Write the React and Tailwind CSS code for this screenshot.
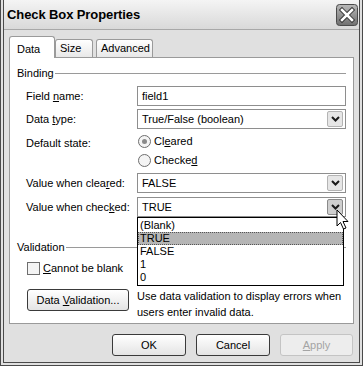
import React from 'react'

const font = { fontFamily: '"Liberation Sans", Arial, sans-serif' }

function Chevron() {
  return (
    <svg width="9" height="6" viewBox="0 0 9 6">
      <path d="M1 1 L4.5 4.5 L8 1" fill="none" stroke="#1a1a1a" strokeWidth="2" />
    </svg>
  )
}

function Select({ value, pressed, children }) {
  return (
    <div className="relative flex h-[20px] items-center border border-[#8e8e8e] bg-white pl-[4px] pr-[2px]">
      <span className="flex-1 leading-none">{value}</span>
      <span
        className={`flex h-[16px] w-[16px] items-center justify-center rounded-[2px] border ${
          pressed ? 'border-[#8a8a8a] bg-[#cfcfcf]' : 'border-[#b4b4b4] bg-[#e6e6e6]'
        }`}
      >
        <Chevron />
      </span>
      {children}
    </div>
  )
}

function Radio({ checked }) {
  return (
    <span className="flex h-[13px] w-[13px] items-center justify-center rounded-full border border-[#6e6e6e] bg-[#f4f4f4]">
      {checked && <span className="h-[5px] w-[5px] rounded-full bg-[#8a8a8a]" />}
    </span>
  )
}

function GroupHeader({ label }) {
  return (
    <div className="flex h-[14px] items-center gap-[1px]">
      <span className="leading-none">{label}</span>
      <span className="h-px flex-1 bg-[#9a9a9a]" />
    </div>
  )
}

function Button({ children, disabled, className = '' }) {
  return (
    <div
      className={`flex h-[22px] shrink-0 items-center justify-center whitespace-nowrap rounded-[3px] border ${
        disabled
          ? 'border-[#c4c4c4] bg-[#ededed] text-[#a4a4a4]'
          : 'border-[#3a3a3a] bg-gradient-to-b from-white to-[#e4e4e4] text-black'
      } ${className}`}
    >
      {children}
    </div>
  )
}

export default function App() {
  return (
    <div
      style={font}
      className="relative flex h-[366px] w-[363px] flex-col overflow-hidden border-[4px] border-t-0 border-double border-[#4a4a4a] bg-[#e0e0e0] text-[11px] text-black"
    >
      {/* title bar */}
      <div className="flex h-[30px] items-center justify-between border-b border-[#a8a8a8] bg-gradient-to-b from-[#f4f4f4] to-[#d9d9d9] pl-[3px] pr-[1px]">
        <span className="text-[13px] font-bold tracking-[-0.1px]">Check Box Properties</span>
        <svg width="22" height="22" viewBox="0 0 22 22">
          <defs>
            <linearGradient id="cb" x1="0" y1="0" x2="0" y2="1">
              <stop offset="0" stopColor="#b9b9b9" />
              <stop offset="1" stopColor="#6f6f6f" />
            </linearGradient>
          </defs>
          <rect x="0.5" y="0.5" width="21" height="21" rx="3" fill="url(#cb)" stroke="#4a4a4a" />
          <path d="M6 6 L16 16 M16 6 L6 16" stroke="#3a3a3a" strokeWidth="4.5" strokeLinecap="square" />
          <path d="M6 6 L16 16 M16 6 L6 16" stroke="#ffffff" strokeWidth="2.5" strokeLinecap="square" />
        </svg>
      </div>

      <div className="flex flex-1 flex-col px-[5px] pt-[6px]">
        {/* tabs */}
        <div className="flex h-[21px] items-end">
          <div className="relative z-10 -mb-px flex h-[22px] w-[46px] items-start rounded-t-[3px] border border-b-0 border-[#9a9a9a] bg-white pl-[7px] pt-[4px]">
            Data
          </div>
          <div className="flex h-[18px] w-[38px] items-center rounded-t-[3px] border border-b-0 border-[#9a9a9a] bg-gradient-to-b from-white to-[#e8e8e8] pl-[4px]">
            Size
          </div>
          <div className="ml-[3px] flex h-[18px] w-[57px] items-center rounded-t-[3px] border border-b-0 border-[#9a9a9a] bg-gradient-to-b from-white to-[#e8e8e8] pl-[4px]">
            Advanced
          </div>
        </div>

        {/* tab panel */}
        <div className="flex h-[267px] flex-col border border-[#9a9a9a] bg-white pl-[7px] pr-[7px] pt-[8px]">
          <GroupHeader label="Binding" />
          <div className="mt-[6px] grid grid-cols-[111px_1fr] items-center pl-[9px]">
            <span>
              Field <u>n</u>ame:
            </span>
            <div className="flex h-[20px] items-center border border-[#8e8e8e] bg-white pl-[4px]">field1</div>

            <span className="mt-[3px]">
              Data <u>t</u>ype:
            </span>
            <div className="mt-[3px]">
              <Select value="True/False (boolean)" />
            </div>

            <span className="mt-[3px] self-start pt-[3px]">Default state:</span>
            <div className="mt-[3px] flex flex-col pl-[1px]">
              <div className="flex h-[19px] items-center gap-[3px]">
                <Radio checked />
                <span>
                  Cl<u>e</u>ared
                </span>
              </div>
              <div className="flex h-[19px] items-center gap-[3px]">
                <Radio />
                <span>
                  Checke<u>d</u>
                </span>
              </div>
            </div>

            <span className="mt-[3px]">
              Value when clea<u>r</u>ed:
            </span>
            <div className="mt-[3px]">
              <Select value="FALSE" />
            </div>

            <span className="mt-[4px]">
              Value when chec<u>k</u>ed:
            </span>
            <div className="mt-[4px]">
              <Select value="TRUE" pressed>
                {/* open drop-down list */}
                <div className="absolute left-[-1px] right-[1px] top-[19px] z-20 flex flex-col border border-black bg-white py-[1px] leading-[13px]">
                  <span className="pl-[2px]">(Blank)</span>
                  <span className="border border-dotted border-[#555] bg-[#b5b5b5] pl-[1px] leading-[11px]">TRUE</span>
                  <span className="pl-[2px]">FALSE</span>
                  <span className="pl-[2px]">1</span>
                  <span className="pl-[2px]">0</span>
                </div>
              </Select>
            </div>
          </div>

          <div className="mt-[23px]">
            <GroupHeader label="Validation" />
          </div>
          <div className="mt-[7px] flex h-[14px] items-center gap-[3px] pl-[10px]">
            <span className="h-[13px] w-[13px] border border-[#6e6e6e] bg-[#f4f4f4]" />
            <span>
              <u>C</u>annot be blank
            </span>
          </div>
          <div className="mt-[13px] flex items-start pl-[10px]">
            <Button className="mt-px w-[102px]">
              <span>
                Data <u>V</u>alidation...
              </span>
            </Button>
            <p className="ml-[8px] pr-[4px] leading-[16px]">
              Use data validation to display errors when users enter invalid data.
            </p>
          </div>
        </div>

        {/* dialog buttons */}
        <div className="mt-[10px] flex justify-end gap-[10px] pr-[1px]">
          <Button className="w-[74px]">OK</Button>
          <Button className="w-[74px]">Cancel</Button>
          <Button disabled className="w-[73px]">
            <span>
              <u>A</u>pply
            </span>
          </Button>
        </div>
      </div>

      {/* mouse pointer */}
      <svg className="absolute left-[332px] top-[209px] z-30" width="14" height="22" viewBox="0 0 14 22">
        <path
          d="M1 1 L1 17 L4.5 13.5 L7.5 20 L10 19 L7 12.5 L12 12.5 Z"
          fill="#ffffff"
          stroke="#000000"
          strokeWidth="1"
          strokeLinejoin="miter"
        />
      </svg>
    </div>
  )
}
